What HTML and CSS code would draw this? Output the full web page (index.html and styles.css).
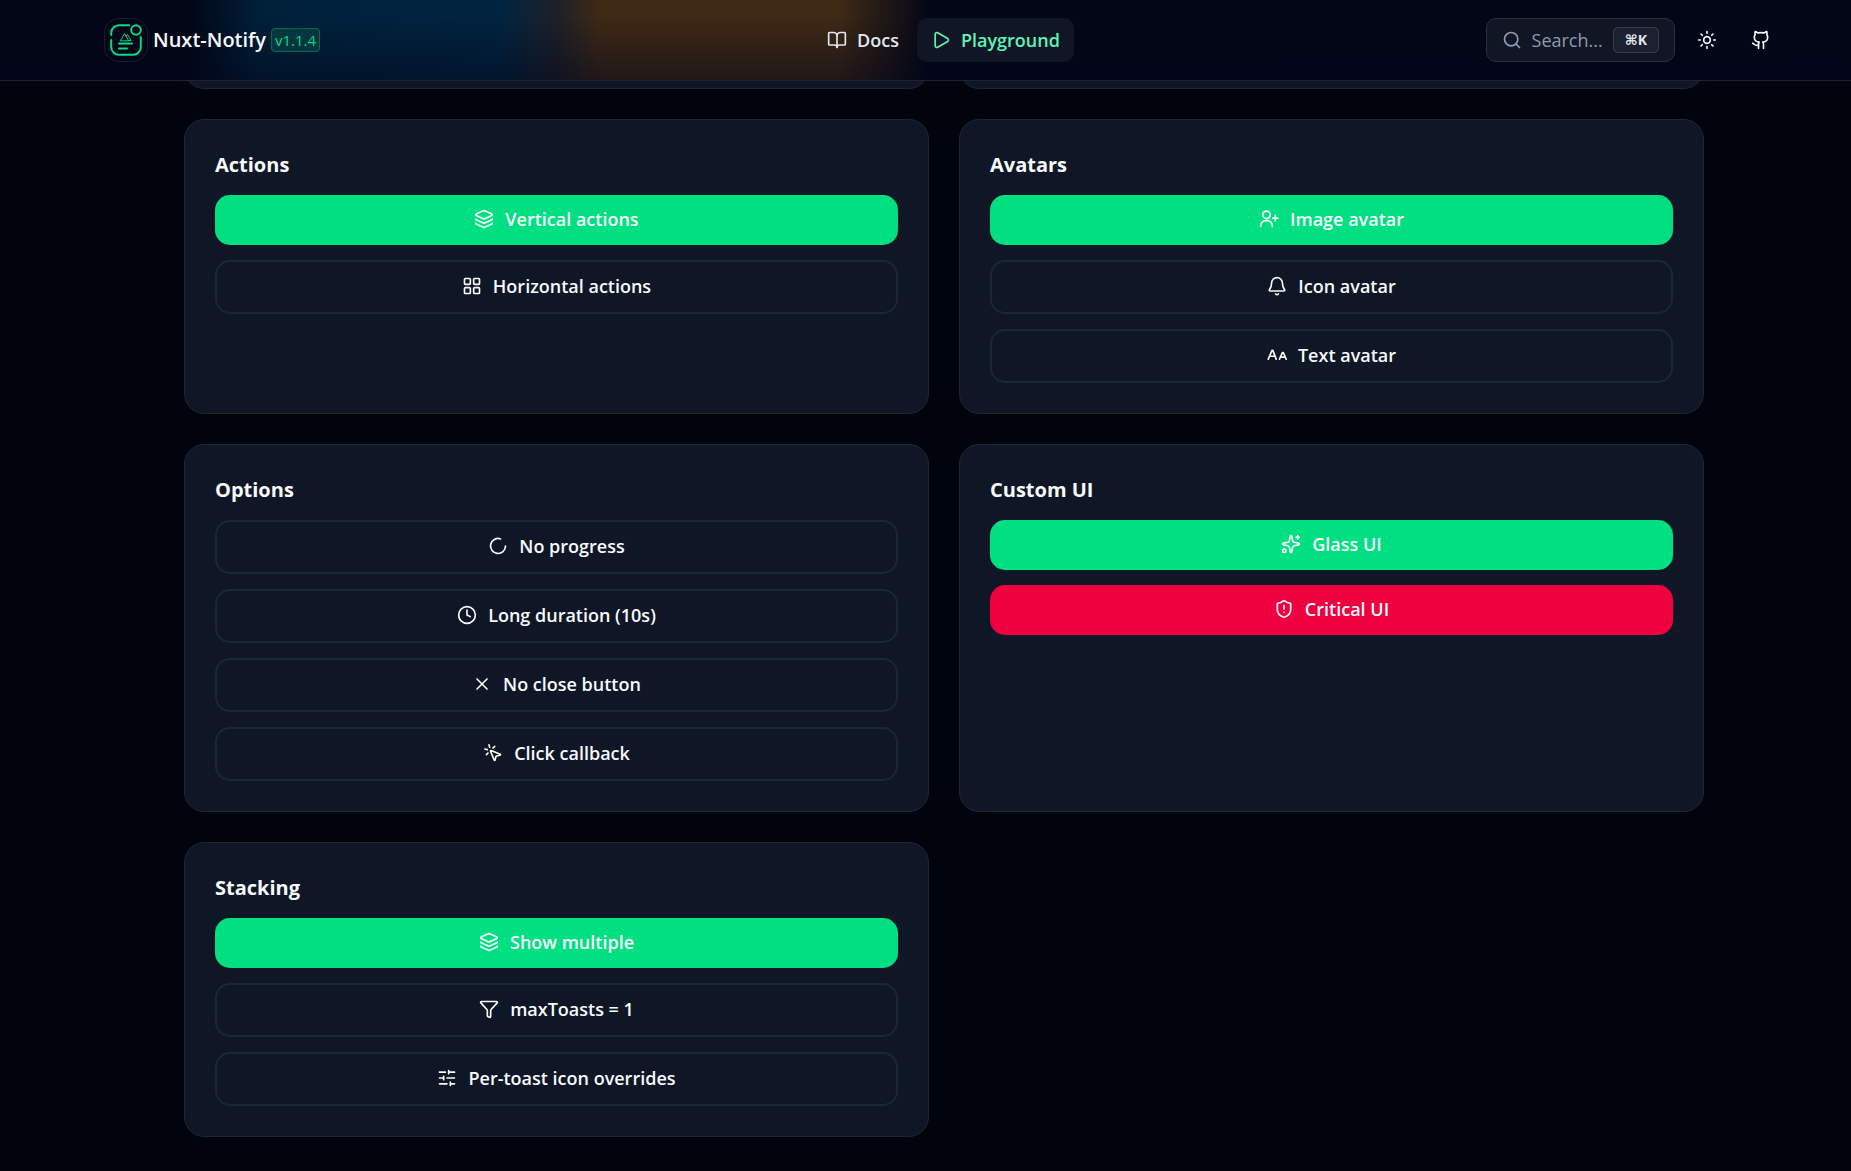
FILE: index.html
```html
<!DOCTYPE html>
<html lang="en">
<head>
<meta charset="utf-8">
<title>Nuxt-Notify Playground</title>
<link rel="stylesheet" href="styles.css">
</head>
<body>
<svg class="sprite" aria-hidden="true">
  <symbol id="layers" viewBox="0 0 24 24"><path d="M12.83 2.18a2 2 0 0 0-1.66 0L2.6 6.08a1 1 0 0 0 0 1.83l8.58 3.91a2 2 0 0 0 1.66 0l8.58-3.9a1 1 0 0 0 0-1.83z"/><path d="M2 12a1 1 0 0 0 .58.91l8.6 3.91a2 2 0 0 0 1.65 0l8.58-3.9A1 1 0 0 0 22 12"/><path d="M2 17a1 1 0 0 0 .58.91l8.6 3.91a2 2 0 0 0 1.65 0l8.58-3.9A1 1 0 0 0 22 17"/></symbol>
</svg>
<header class="topbar">
  <a class="brand" href="#">
    <span class="brand-mark">
      <svg class="logo" viewBox="0 0 32 32" aria-hidden="true">
        <path d="M1.200 11V9A7.800 7.800 0 0 1 9 1.200H19M30.800 13V23A7.800 7.800 0 0 1 23 30.800H9A7.800 7.800 0 0 1 1.200 23V16"/>
        <circle cx="26" cy="6" r="4.800"/>
        <path class="thin" d="M10.500 16.500L14.500 9.500L18.500 16.500ZM16 12L17.500 10.500L21 16.500H18.500"/>
        <path d="M9 19.500H22M9 24.500H17"/>
      </svg>
    </span>
    <span class="brand-name">Nuxt-Notify</span>
    <span class="version">v1.1.4</span>
  </a>
  <nav class="nav">
    <a class="nav-link" href="#"><svg class="icon" viewBox="0 0 24 24" aria-hidden="true"><path d="M12 7v14"/><path d="M3 18a1 1 0 0 1-1-1V4a1 1 0 0 1 1-1h5a4 4 0 0 1 4 4 4 4 0 0 1 4-4h5a1 1 0 0 1 1 1v13a1 1 0 0 1-1 1h-6a3 3 0 0 0-3 3 3 3 0 0 0-3-3z"/></svg>Docs</a>
    <a class="nav-link active" href="#" aria-current="page"><svg class="icon" viewBox="0 0 24 24" aria-hidden="true"><path d="M5 5a2 2 0 0 1 3.008-1.728l11.997 6.998a2 2 0 0 1 .003 3.458l-12 7A2 2 0 0 1 5 19z"/></svg>Playground</a>
  </nav>
  <div class="tools">
    <button class="search" type="button"><svg class="icon" viewBox="0 0 24 24" aria-hidden="true"><path d="m21 21-4.340-4.340"/><circle cx="11" cy="11" r="8"/></svg><span>Search...</span><kbd class="kbd">⌘K</kbd></button>
    <button class="tool" type="button" aria-label="Toggle theme"><svg class="icon" viewBox="0 0 24 24" aria-hidden="true"><circle cx="12" cy="12" r="4"/><path d="M12 2v2M12 20v2M4.930 4.930l1.410 1.410M17.660 17.660l1.410 1.410M2 12h2M20 12h2M6.340 17.660l-1.410 1.410M19.070 4.930l-1.410 1.410"/></svg></button>
    <a class="tool" href="#" aria-label="GitHub"><svg class="icon" viewBox="0 0 24 24" aria-hidden="true"><path d="M15 22v-4a4.800 4.800 0 0 0-1-3.500c3 0 6-2 6-5.500.080-1.250-.270-2.480-1-3.500.280-1.150.280-2.350 0-3.500 0 0-1 0-3 1.500-2.640-.5-5.360-.5-8 0C6 2 5 2 5 2c-.3 1.150-.3 2.350 0 3.500A5.403 5.403 0 0 0 4 9c0 3.500 3 5.500 6 5.500-.390.490-.680 1.050-.850 1.650-.170.600-.220 1.230-.150 1.850v4"/><path d="M9 18c-4.510 2-5-2-7-2"/></svg></a>
  </div>
</header>
<main class="board">
  <div class="card-end"></div>
  <div class="card-end"></div>
  <section class="card">
    <h2>Actions</h2>
    <button class="btn primary" type="button"><svg class="icon" aria-hidden="true"><use href="#layers"/></svg>Vertical actions</button>
    <button class="btn" type="button"><svg class="icon" viewBox="0 0 24 24" aria-hidden="true"><rect width="7" height="7" x="3" y="3" rx="1"/><rect width="7" height="7" x="14" y="3" rx="1"/><rect width="7" height="7" x="14" y="14" rx="1"/><rect width="7" height="7" x="3" y="14" rx="1"/></svg>Horizontal actions</button>
  </section>
  <section class="card">
    <h2>Avatars</h2>
    <button class="btn primary" type="button"><svg class="icon" viewBox="0 0 24 24" aria-hidden="true"><path d="M2 21v-1a6 6 0 0 1 6-6h2a6 6 0 0 1 6 6v1"/><circle cx="9" cy="7" r="4.500"/><path d="M19.500 8v6M22.500 11h-6"/></svg>Image avatar</button>
    <button class="btn" type="button"><svg class="icon" viewBox="0 0 24 24" aria-hidden="true"><path d="M10.268 21.500a2 2 0 0 0 3.464 0"/><path d="M3 16.300A1 1 0 0 0 3.700 18h16.600a1 1 0 0 0 .740-1.700C19.410 14.500 18.500 12.500 18.500 8.500A6.500 6.500 0 0 0 5.500 8.500c0 4-1 6-2.500 7.800"/></svg>Icon avatar</button>
    <button class="btn" type="button"><svg class="icon" viewBox="0 0 24 24" aria-hidden="true"><path d="M1.500 17L6 6.500H7L11 17M3.500 13.500H9.500M15 17L18.500 9H19.500L23 17M16.500 14.500H21.500"/></svg>Text avatar</button>
  </section>
  <section class="card">
    <h2>Options</h2>
    <button class="btn" type="button"><svg class="icon" viewBox="0 0 24 24" aria-hidden="true"><path d="M15 3.500A9 9 0 1 0 21 12"/></svg>No progress</button>
    <button class="btn" type="button"><svg class="icon" viewBox="0 0 24 24" aria-hidden="true"><circle cx="12" cy="12" r="10"/><path d="M12 6v6l4 2"/></svg>Long duration (10s)</button>
    <button class="btn" type="button"><svg class="icon" viewBox="0 0 24 24" aria-hidden="true"><path d="M18 6 6 18M6 6l12 12"/></svg>No close button</button>
    <button class="btn" type="button"><svg class="icon" viewBox="0 0 24 24" aria-hidden="true"><path d="M14 4.100 12 6M5.100 8l-2.900-.8M6 12l-1.900 2M7.200 2.200 8 5.100"/><path d="M9.037 9.690a.498.498 0 0 1 .653-.653l11 4.500a.5.5 0 0 1-.074.949l-4.349 1.041a1 1 0 0 0-.740.739l-1.040 4.350a.5.5 0 0 1-.950.074z"/></svg>Click callback</button>
  </section>
  <section class="card">
    <h2>Custom UI</h2>
    <button class="btn primary" type="button"><svg class="icon" viewBox="0 0 24 24" aria-hidden="true"><path d="M11.017 2.814a1 1 0 0 1 1.966 0l1.051 5.558a2 2 0 0 0 1.594 1.594l5.558 1.051a1 1 0 0 1 0 1.966l-5.558 1.051a2 2 0 0 0-1.594 1.594l-1.051 5.558a1 1 0 0 1-1.966 0l-1.051-5.558a2 2 0 0 0-1.594-1.594l-5.558-1.051a1 1 0 0 1 0-1.966l5.558-1.051a2 2 0 0 0 1.594-1.594zM20 2v4M22 4h-4"/><circle cx="4" cy="20" r="2"/></svg>Glass UI</button>
    <button class="btn danger" type="button"><svg class="icon" viewBox="0 0 24 24" aria-hidden="true"><path d="M20 13c0 5-3.500 7.500-7.660 8.950a1 1 0 0 1-.670-.010C7.500 20.500 4 18 4 13V6a1 1 0 0 1 1-1c2 0 4.500-1.200 6.240-2.720a1.170 1.170 0 0 1 1.520 0C14.510 3.810 17 5 19 5a1 1 0 0 1 1 1zM12 8v4M12 16h.01"/></svg>Critical UI</button>
  </section>
  <section class="card">
    <h2>Stacking</h2>
    <button class="btn primary" type="button"><svg class="icon" aria-hidden="true"><use href="#layers"/></svg>Show multiple</button>
    <button class="btn" type="button"><svg class="icon" viewBox="0 0 24 24" aria-hidden="true"><path d="M10 20a1 1 0 0 0 .553.895l2 1A1 1 0 0 0 14 21v-7a2 2 0 0 1 .517-1.341L21.740 4.670A1 1 0 0 0 21 3H3a1 1 0 0 0-.742 1.670l7.225 7.989A2 2 0 0 1 10 14z"/></svg>maxToasts = 1</button>
    <button class="btn" type="button"><svg class="icon" viewBox="0 0 24 24" aria-hidden="true"><path d="M10 5H3M12 19H3M14 3v4M16 17v4M21 12h-9M21 19h-5M21 5h-7M8 10v4M8 12H3"/></svg>Per-toast icon overrides</button>
  </section>
</main>
</body>
</html>
```
FILE: styles.css
```css
* { box-sizing: border-box; }

body {
  margin: 0;
  background: #01030d;
  color: #f8fafc;
  font-family: "Open Sans", sans-serif;
  font-size: 18px;
  line-height: 30px;
}

a { color: inherit; text-decoration: none; }
button { font: inherit; color: inherit; cursor: pointer; }

.sprite { display: none; }

.icon, .logo {
  width: 20px;
  height: 20px;
  flex: none;
  fill: none;
  stroke: currentColor;
  stroke-width: 2;
  stroke-linecap: round;
  stroke-linejoin: round;
}

.topbar {
  position: relative;
  z-index: 1;
  display: grid;
  grid-template-columns: 1fr auto 1fr;
  align-items: center;
  height: 81px;
  padding: 0 68px 0 104px;
  border-bottom: 1px solid #1d2130;
  background:
    linear-gradient(180deg, transparent 20%, #02061980 100%),
    linear-gradient(90deg, transparent 190px, #00203a 260px, #002440 500px, #1c2029 555px, #3e2915 600px, #3e2915 840px, transparent 930px),
    #020617;
}

.brand { display: flex; align-items: center; gap: 5px; }
.brand-mark {
  display: flex;
  align-items: center;
  justify-content: center;
  width: 44px;
  height: 44px;
  border: 1px solid #1b1c29;
  border-radius: 15px;
}
.logo { width: 32px; height: 32px; color: #00dc82; }
.logo .thin { stroke-width: 1; }
.brand-name { font-size: 20px; font-weight: 600; }
.version {
  padding: 0 3px;
  border: 1px solid #04694c;
  border-radius: 4px;
  background: #053640;
  color: #00dc82;
  font-size: 15px;
  font-weight: 500;
  line-height: 22px;
}

.nav { display: flex; gap: 4px; color: #e2e8f0; }
.nav-link {
  display: flex;
  align-items: center;
  gap: 10px;
  height: 44px;
  padding: 0 14px;
  border-radius: 10px;
  font-weight: 550;
}
.nav-link.active { background: #111625; color: #5cf5b5; }

.tools { display: flex; align-items: center; justify-content: flex-end; gap: 10px; }
.search {
  display: flex;
  align-items: center;
  gap: 10px;
  height: 44px;
  padding: 0 15px;
  border: 1px solid #2b2e3b;
  border-radius: 10px;
  background: #111625;
  color: #8d9ab0;
}
.kbd {
  padding: 0 11px;
  border: 1px solid #393b48;
  border-radius: 5px;
  background: #1c2030;
  color: #e2e8f0;
  font: 700 14px/24px "Open Sans", "DejaVu Sans", sans-serif;
}
.tool {
  display: flex;
  align-items: center;
  justify-content: center;
  width: 44px;
  height: 44px;
  padding: 0;
  border: 0;
  background: none;
}

.board {
  display: grid;
  grid-template-columns: 1fr 1fr;
  gap: 30px;
  padding: 0 147px 34px 184px;
}
.card, .card-end {
  border: 1px solid #1b2636;
  border-radius: 20px;
  background: #0f1727;
}
.card-end { height: 48px; margin-top: -40px; }
.card {
  display: flex;
  flex-direction: column;
  gap: 15px;
  padding: 30px;
}
.card h2 { margin: 0; font-size: 20px; font-weight: 700; line-height: 30px; }

.btn {
  display: flex;
  align-items: center;
  justify-content: center;
  gap: 11px;
  height: 54px;
  padding: 0 0 2px;
  border: 2px solid #1b2636;
  border-radius: 15px;
  background: none;
  font-weight: 550;
}
.btn.primary, .btn.danger { height: 50px; border: 0; }
.btn.primary { background: #00df82; }
.btn.danger { background: #ef003f; }
```
